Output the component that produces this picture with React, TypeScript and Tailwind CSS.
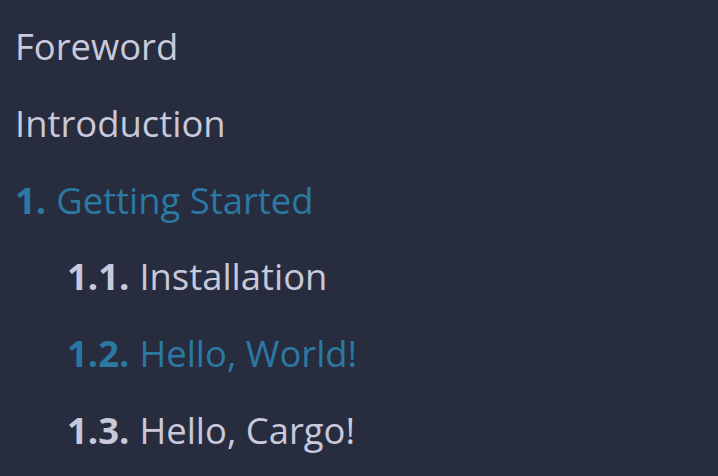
import React from "react";

type Chapter = {
  num?: string;
  title: string;
  active?: boolean;
  nested?: boolean;
};

const chapters: Chapter[] = [
  { title: "Foreword" },
  { title: "Introduction" },
  { num: "1.", title: "Getting Started", active: true },
  { num: "1.1.", title: "Installation", nested: true },
  { num: "1.2.", title: "Hello, World!", active: true, nested: true },
  { num: "1.3.", title: "Hello, Cargo!", nested: true },
];

const App = () => {
  return (
    <div
      className="w-[718px] h-[476px] overflow-hidden bg-[#282c3f] text-[#c8c9db] text-[36.4px] pl-[15px] pt-[8px]"
      style={{ fontFamily: '"Open Sans", sans-serif' }}
    >
      <ol className="flex flex-col">
        {chapters.map((c) => (
          <li
            key={c.title}
            className={`h-[76.8px] flex items-center whitespace-nowrap ${
              c.nested ? "pl-[52px]" : ""
            } ${c.active ? "text-[#2b79a2]" : ""}`}
          >
            {c.num && <strong className="font-bold mr-[10px]">{c.num}</strong>}
            {c.title}
          </li>
        ))}
      </ol>
    </div>
  );
};

export default App;
